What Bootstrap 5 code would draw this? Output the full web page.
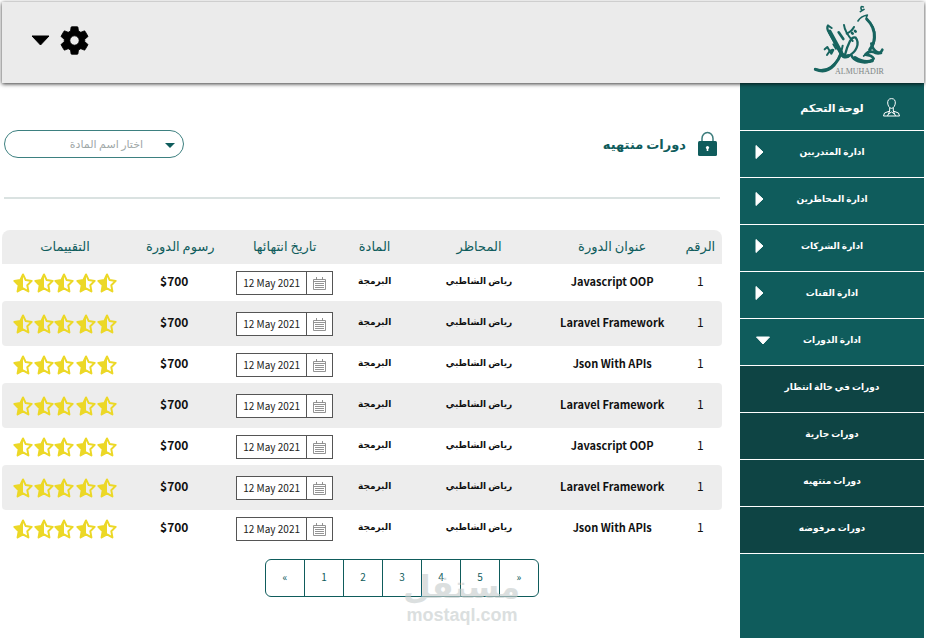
<!DOCTYPE html>
<html lang="ar" dir="rtl">
<head>
<meta charset="utf-8">
<meta name="viewport" content="width=device-width, initial-scale=1">
<title>دورات منتهيه</title>
<link href="https://cdn.jsdelivr.net/npm/bootstrap@5.3.0/dist/css/bootstrap.min.css" rel="stylesheet">
<style>
:root { --teal: #0f5c5c; --teal-dark: #0e4444; --panel: #ededed; }
body { font-family: "Noto Sans CJK SC", "DejaVu Sans", sans-serif; font-size: 12px; color: #111; background: #fff; }
.topbar { background: #ebebeb; height: 81px; margin: 2px 2px 0; box-shadow: 0 1px 4px rgba(0,0,0,.8); z-index: 2; padding: 0 34px 4px 29px; }
.side { width: 184px; background: var(--teal); margin-right: 2px; padding-top: 1px; }
.side-item { display: grid; grid-template-columns: 52px minmax(0, 1fr) 52px; height: 47px; padding: 0 0 4px; border: 0; border-bottom: 1px solid #fff; background: transparent; color: #fff; font-size: 9px; font-weight: 700; line-height: 16px; white-space: nowrap; }
.side-item .start-cell { padding-right: 24px; text-align: start; }
.side-item .end-cell { padding-left: 15px; text-align: end; }
.side-title { font-size: 11px; padding-bottom: 0; }
.side-sub { display: flex; background: var(--teal-dark); text-decoration: none; }
.page-title { font-size: 13px; font-weight: 700; color: var(--teal); line-height: 24px; gap: 11px; }
.content { padding: 0 18px 0 2px; }
.heading-row { padding: 47px 4px 0 2px; }
.subject-box { width: 180px; }
.subject-box select { height: 28px; border: 1px solid #3d8080; border-radius: 14px; background: #fff; color: #a0a8a8; font-size: 11px; line-height: 16px; appearance: none; padding: 0 40px 3px 12px; }
.subject-box svg { right: 9px; top: 13px; pointer-events: none; }
.rule { height: 2px; background: #dae2e1; margin: 39px 2px 31px 2px; }
.courses { border-collapse: separate; border-spacing: 0; table-layout: fixed; text-align: center; }
.courses th { height: 34px; background: var(--panel); color: var(--teal); font-weight: 400; font-size: 13px; padding: 0 0 3px; line-height: 18px; white-space: nowrap; }
.courses th:first-child { border-top-right-radius: 8px; }
.courses th:last-child { border-top-left-radius: 8px; }
.courses td { height: 37px; padding: 0 0 3px; line-height: 16px; vertical-align: middle; white-space: nowrap; }
.courses tr:nth-child(even) td { height: 45px; background: var(--panel); }
.courses tr:nth-child(even) td:first-child { border-radius: 0 4px 4px 0; }
.courses tr:nth-child(even) td:last-child { border-radius: 4px 0 0 4px; }
.courses .latin { font-size: 11px; font-weight: 700; }
.courses .price { font-weight: 700; padding-right: 12px; }
.courses .ar-cell { font-size: 9px; font-weight: 700; }
.courses .flush { padding: 0; }
.date-box { width: 97px; height: 24px; border: 1px solid #555; background: #fff; }
.date-box input { width: 69px; border: 0; padding: 0; text-align: center; font-size: 10px; line-height: 16px; color: #222; background: transparent; }
.date-box button { width: 26px; border: 0; border-left: 1px solid #555; background: transparent; padding: 0; line-height: 12px; }
.pages { padding: 12px 0 0 80px; }
.pages .page-link { width: 40px; height: 38px; border-color: var(--teal); color: var(--teal); font-size: 10px; line-height: 34px; padding: 0; text-align: center; background: transparent; }
.watermark { position: absolute; left: 404px; bottom: 13px; width: 116px; color: #c9cfcf; opacity: .65; font-weight: 700; text-align: center; pointer-events: none; white-space: nowrap; }
.wm-ar { font-family: "DejaVu Sans", sans-serif; font-size: 32px; line-height: 36px; }
.wm-en { font-family: "Liberation Sans", sans-serif; font-size: 18px; line-height: 20px; }
</style>
</head>
<body>
<div class="d-flex flex-column min-vh-100">
<header class="topbar d-flex justify-content-between align-items-center position-relative">
  <a href="#" class="d-block" aria-label="ALMUHADIR">
    <svg class="d-block" width="82" height="76" viewBox="0 0 246 228" fill="none" stroke="#17645f" stroke-linecap="round" stroke-linejoin="round">
      <path d="M166 12q-8-4-7 4t9 3l-11 7" stroke-width="5"/>
      <path d="M150 54q8-14 28-18q-5 8-2 13q27 22 25 54q-1 33-34 56" stroke-width="5"/>
      <path d="M176 48q25 24 23 56q-1 20-14 36" stroke-width="9"/>
      <path d="M190 122q4 18 19 26q9 4 14-8" stroke-width="8"/>
      <path d="M219 150q-14 3-23-3q-14-4-24 8q20 2 25 12q-16 17-46 8q-16-6-21-18" stroke-width="8"/>
      <path d="M193 173q-24 9-52-9" stroke-width="10"/>
      <path d="M60 68q-5 9 3 20l34 62q7 15 22 10q20-9 27-26q7-18-3-30q-9-4-17 10q-10 20-15 41" stroke-width="7"/>
      <path d="M65 86l36 66q7 12 19 7" stroke-width="12"/>
      <path d="M60 68l11 7M108 66q2 20 26 48M116 92q16-8 22-20" stroke-width="6"/>
      <path d="M92 88l14 20M132 90l2 2M141 84l2 2" stroke-width="8"/>
      <path d="M21 198q25 9 47-6q30-20 36-64" stroke-width="6"/>
      <path d="M22 199q32 14 56-12q14-16 22-38" stroke-width="9"/>
      <path d="M50 139l8-7l7 12l9-4M57 156l8-12l5 8l6-11M76 124l8 13" stroke-width="6"/>
      <text x="81" y="213" direction="ltr" font-family="Liberation Serif, serif" font-size="24" stroke="none" fill="#7d8585">ALMUHADIR</text>
    </svg>
  </a>
  <button type="button" class="btn border-0 p-0 d-flex align-items-center gap-2" aria-label="الإعدادات">
    <svg width="33" height="33" viewBox="0 0 24 24" fill="#000"><path d="M19.43 12.98c.04-.32.07-.64.07-.98s-.03-.66-.07-.98l2.11-1.65c.19-.15.24-.42.12-.64l-2-3.460c-.12-.22-.39-.3-.61-.22l-2.490 1c-.52-.4-1.080-.73-1.690-.98l-.38-2.650A.49.49 0 0 0 14 2h-4c-.25 0-.46.18-.49.42l-.38 2.650c-.61.25-1.170.59-1.690.98l-2.490-1c-.23-.09-.49 0-.61.22l-2 3.460c-.13.22-.07.49.12.64l2.110 1.650c-.04.32-.07.65-.07.98s.03.66.07.98l-2.110 1.650c-.19.15-.24.42-.12.64l2 3.460c.12.22.39.3.61.22l2.490-1c.52.4 1.080.73 1.690.98l.38 2.650c.03.24.24.42.49.42h4c.25 0 .46-.18.49-.42l.38-2.650c.61-.25 1.170-.59 1.690-.98l2.490 1c.23.09.49 0 .61-.22l2-3.460c.12-.22.07-.49-.12-.64zM12 15.400a3.400 3.400 0 1 1 0-6.800 3.400 3.400 0 0 1 0 6.800z" stroke="#000" stroke-width=".6"/></svg>
    <svg width="19" height="11" viewBox="0 0 19 11"><path d="M1 1h17L9.500 10z" stroke="#000" stroke-linejoin="round"/></svg>
  </button>
</header>

<div class="d-flex flex-grow-1">
  <nav class="side flex-shrink-0" aria-label="القائمة">
    <div class="side-item side-title align-items-center text-center">
      <span class="start-cell"><svg width="17" height="19" viewBox="0 0 17 19" fill="none" stroke="#fff"><path d="M8.500 .6C5.500 .6 4.600 2.600 4.700 5c.1 2.500 1.700 5.400 3.800 5.400s3.700-2.900 3.800-5.400c.1-2.400-.8-4.400-3.800-4.400zM6.700 10v3L1.500 15l-1 3h16l-1-3-5.200-2v-3M6.700 13l-2.200 5M10.300 13l2.200 5M5.500 16l3-2 3 2"/></svg></span>
      <span>لوحة التحكم</span><span></span>
    </div>
    <button type="button" class="side-item w-100 align-items-center text-center"><span></span><span>ادارة المتدربين</span><span class="end-cell"><svg width="9" height="16" viewBox="0 0 9 16"><path d="M1 1.500v13L8 8z" fill="#fff" stroke="#fff" stroke-linejoin="round"/></svg></span></button>
    <button type="button" class="side-item w-100 align-items-center text-center"><span></span><span>ادارة المحاظرين</span><span class="end-cell"><svg width="9" height="16" viewBox="0 0 9 16"><path d="M1 1.500v13L8 8z" fill="#fff" stroke="#fff" stroke-linejoin="round"/></svg></span></button>
    <button type="button" class="side-item w-100 align-items-center text-center"><span></span><span>ادارة الشركات</span><span class="end-cell"><svg width="9" height="16" viewBox="0 0 9 16"><path d="M1 1.500v13L8 8z" fill="#fff" stroke="#fff" stroke-linejoin="round"/></svg></span></button>
    <button type="button" class="side-item w-100 align-items-center text-center"><span></span><span>ادارة القنات</span><span class="end-cell"><svg width="9" height="16" viewBox="0 0 9 16"><path d="M1 1.500v13L8 8z" fill="#fff" stroke="#fff" stroke-linejoin="round"/></svg></span></button>
    <button type="button" class="side-item w-100 align-items-center text-center" aria-expanded="true"><span></span><span>ادارة الدورات</span><span class="end-cell"><svg width="16" height="9" viewBox="0 0 16 9"><path d="M1.500 1h13L8 8z" fill="#fff" stroke="#fff" stroke-linejoin="round"/></svg></span></button>
    <a href="#" class="side-item side-sub align-items-center justify-content-center">دورات في حالة انتظار</a>
    <a href="#" class="side-item side-sub align-items-center justify-content-center">دورات جارية</a>
    <a href="#" class="side-item side-sub align-items-center justify-content-center">دورات منتهيه</a>
    <a href="#" class="side-item side-sub align-items-center justify-content-center">دورات مرفوضه</a>
  </nav>

  <main class="content flex-grow-1 position-relative">
    <div class="heading-row d-flex justify-content-between align-items-center">
      <h1 class="page-title m-0 d-flex align-items-center">
        <svg width="21" height="26" viewBox="0 0 21 26"><path d="M5 12V7.500a5.500 6 0 0 1 11 0V12" fill="none" stroke="#3c7c7c" stroke-width="1.500"/><rect x="1" y="10" width="19" height="15" rx="1.500" fill="#0f5c5c"/><circle cx="10.500" cy="16.500" r="1.600" fill="#fff"/><path d="M9.700 16.500h1.600V20H9.700z" fill="#fff"/></svg>
        <span>دورات منتهيه</span>
      </h1>
      <div class="subject-box position-relative">
        <select class="w-100" aria-label="اختار اسم المادة"><option>اختار اسم المادة</option></select>
        <svg class="position-absolute" width="10" height="5" viewBox="0 0 10 5"><path d="M0 0h10L5 5z" fill="#0f5c5c"/></svg>
      </div>
    </div>
    <div class="rule"></div>
    <table class="courses w-100">
      <colgroup><col style="width:6%"><col style="width:18.5%"><col style="width:18.5%"><col style="width:10.5%"><col style="width:14.5%"><col style="width:14.5%"><col style="width:17.5%"></colgroup>
      <thead><tr><th>الرقم</th><th>عنوان الدورة</th><th>المحاظر</th><th>المادة</th><th>تاريخ انتهائها</th><th>رسوم الدورة</th><th>التقييمات</th></tr></thead>
      <tbody id="rows"></tbody>
    </table>
    <nav class="pages d-flex justify-content-center" aria-label="الصفحات" dir="ltr">
      <ul class="pagination m-0 p-0">
        <li class="page-item"><a class="page-link" href="#">«</a></li>
        <li class="page-item"><a class="page-link" href="#">1</a></li>
        <li class="page-item"><a class="page-link" href="#">2</a></li>
        <li class="page-item"><a class="page-link" href="#">3</a></li>
        <li class="page-item"><a class="page-link" href="#">4</a></li>
        <li class="page-item"><a class="page-link" href="#">5</a></li>
        <li class="page-item"><a class="page-link" href="#">»</a></li>
      </ul>
    </nav>
    <div class="watermark"><div class="wm-ar">مستقل</div><div class="wm-en">mostaql.com</div></div>
  </main>
</div>
</div>
<script>
const titles = ["Javascript OOP", "Laravel Framework", "Json With APIs", "Laravel Framework", "Javascript OOP", "Laravel Framework", "Json With APIs"];
const star = x => `<g transform="translate(${x} 0)"><path d="M10 1.500l2.700 5.600 6 .8-4.400 4.300 1.100 6.200L10 15.400l-5.400 3 1.100-6.200L1.300 7.900l6-.8z" fill="none" stroke="#ecd827" stroke-width="2" stroke-linejoin="round"/><path d="M10 1.500v13.900l-5.400 3 1.100-6.200L1.300 7.900l6-.8z" fill="#ecd827"/></g>`;
const stars = `<svg width="106" height="20" viewBox="0 0 106 20" role="img" aria-label="2.5">${[1, 22, 42, 64, 85].map(star).join("")}</svg>`;
const calendar = `<svg width="13" height="13" viewBox="0 0 13 13" fill="none" stroke="#888"><path d="M.5 2.500h12v10H.5zM.5 4.500h12M2 6.500h9M2 8.500h9M2 10.500h9M3.500 0v3M9.500 0v3" stroke-width=".9"/></svg>`;
document.getElementById("rows").innerHTML = titles.map(t => `<tr><td>1</td><td class="latin" dir="ltr">${t}</td><td class="ar-cell">رياض الشاطبي</td><td class="ar-cell">البرمجة</td><td class="flush"><div class="date-box d-inline-flex align-middle" dir="ltr"><input type="text" value="12 May 2021" aria-label="تاريخ الانتهاء"><button type="button" aria-label="التقويم">${calendar}</button></div></td><td class="price" dir="ltr">$700</td><td class="flush">${stars}</td></tr>`).join("");
</script>
<script src="https://cdn.jsdelivr.net/npm/bootstrap@5.3.0/dist/js/bootstrap.bundle.min.js"></script>
</body>
</html>
